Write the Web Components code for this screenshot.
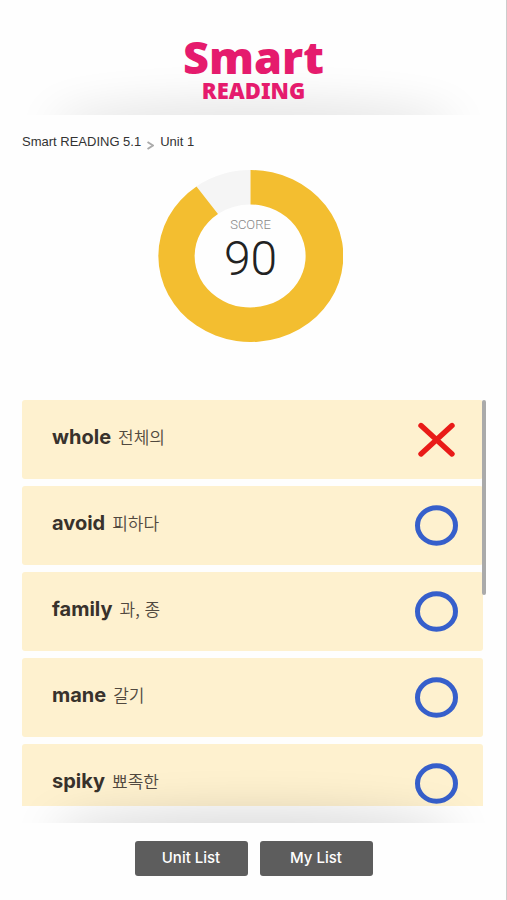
<!DOCTYPE html>
<html lang="ko">
<head>
<meta charset="utf-8">
<meta name="viewport" content="width=device-width, initial-scale=1">
<title>Smart READING</title>
<style>
html, body { margin: 0; height: 100%; background: #fefefe; }
</style>
</head>
<body>
<result-page></result-page>
<script>
const define = (name, html) => {
  const tpl = document.createElement('template');
  tpl.innerHTML = html;
  customElements.define(name, class extends HTMLElement {
    constructor() {
      super();
      this.attachShadow({ mode: 'open' }).append(tpl.content.cloneNode(true));
    }
  });
};

// Soft shadow that rises from the lower edge of its box.
define('edge-shade', `
<style>
  :host { display: block; position: absolute; left: 0; right: 0; bottom: 0; height: 80px; overflow: hidden; pointer-events: none; }
  div { position: absolute; left: 56px; right: 56px; top: 100%; height: 30px; border-radius: 50%;
    box-shadow: 0 -4px 44px 8px rgba(0,0,0,var(--shade, .11)); }
</style>
<div></div>`);

define('brand-header', `
<style>
  :host { display: block; position: relative; box-sizing: border-box; height: 115px; padding-top: 34px;
    color: #e51b6d; font-family: "Noto Sans", sans-serif; }
  h1 { position: relative; margin: 0; display: flex; flex-direction: column; align-items: center; font-weight: 900; }
  .big { font-size: 45px; line-height: 46px; }
  .small { font-size: 22px; line-height: 20px; }
</style>
<edge-shade></edge-shade>
<h1><span class="big">Smart</span><span class="small">READING</span></h1>`);

define('crumb-trail', `
<style>
  :host { display: block; padding: 18px 22px 0; font: 13px/18px "Liberation Sans", sans-serif; color: #333; }
  nav { display: flex; align-items: center; gap: 6px; }
  svg { width: 7px; height: 9px; margin-top: 6px; }
</style>
<nav aria-label="Breadcrumb"><slot name="book"></slot>
<svg viewBox="0 0 7 9" fill="none" stroke="#aaa" stroke-width="2"><path d="M0.5 1 L6 4.5 L0.5 8"/></svg>
<slot name="unit"></slot></nav>`);

define('score-ring', `
<style>
  :host { display: grid; justify-items: center; padding: 19px 6px 58px 0; }
  svg, .label { grid-area: 1 / 1; }
  svg { width: 185px; height: 172px; }
  .label { display: flex; flex-direction: column; align-items: center; padding-top: 47px; font-family: Roboto, sans-serif; font-weight: 300; }
  .cap { font-size: 13px; line-height: 15px; color: #888; }
  .num { font-size: 48px; line-height: 54px; color: #222; }
</style>
<svg viewBox="0 0 185 172" aria-hidden="true">
  <path fill="#f5f5f5" d="M92.5 0 A92.5 86 0 0 0 38.5 16.4 L60 44 A55.5 51.5 0 0 1 92.5 34.5 Z"/>
  <path fill="#f3be30" d="M92.5 0 A92.5 86 0 1 1 38.5 16.4 L60 44 A55.5 51.5 0 1 0 92.5 34.5 Z"/>
</svg>
<div class="label"><span class="cap">SCORE</span><span class="num"><slot></slot></span></div>`);

define('word-row', `
<style>
  :host { display: flex; flex: none; align-items: center; justify-content: space-between; box-sizing: border-box;
    height: 79px; padding: 0 24px 0 30px; border-radius: 3px; background: #fef1cf; }
  .text { display: flex; align-items: baseline; gap: 7px; padding-bottom: 6px; line-height: 26px; }
  .word { font-family: Inter, sans-serif; font-weight: 700; font-size: 20px; color: #38322c; }
  .mean { font-family: "Noto Sans CJK KR", sans-serif; font-weight: 350; font-size: 17px; color: #51493f; }
  svg { width: 45px; height: 42px; }
  .cross, :host([wrong]) .ring { display: none; }
  :host([wrong]) .cross { display: inline; }
</style>
<div class="text"><span class="word"><slot name="word"></slot></span><span class="mean"><slot></slot></span></div>
<svg viewBox="0 0 45 42" fill="none" aria-hidden="true">
  <ellipse class="ring" cx="22.5" cy="20.5" rx="19" ry="17.7" stroke="#365fcb" stroke-width="5"/>
  <path class="cross" d="M7 6.5 L38 35 M38 6.5 L7 35" stroke="#e91b18" stroke-width="5.4" stroke-linecap="round"/>
</svg>`);

define('word-list', `
<style>
  :host { display: block; position: relative; flex: 1 1 0; min-height: 0; margin: 0 21px 0 22px; }
  .rows { display: flex; flex-direction: column; gap: 7px; height: 100%; margin-right: 3px; overflow: hidden; }
  .thumb { position: absolute; top: 0; right: 0; width: 4px; height: 48%; border-radius: 2px; background: #aaa; }
</style>
<div class="rows"><slot></slot></div><div class="thumb"></div>`);

define('page-footer', `
<style>
  :host { display: block; }
  .band { position: relative; height: 17px; --shade: .15; }
  .bar { display: flex; justify-content: center; gap: 12px; padding: 18px 0 24px; }
</style>
<div class="band"><edge-shade></edge-shade></div><div class="bar"><slot></slot></div>`);

define('action-button', `
<style>
  :host { display: block; }
  button { display: block; width: 113px; height: 35px; margin: 0; padding: 0 0 2px; border: 0; border-radius: 3px;
    background: #5d5d5d; color: #fff; font: 500 15px/20px Inter, sans-serif; }
</style>
<button type="button"><slot></slot></button>`);

define('result-page', `
<style>
  :host { display: flex; flex-direction: column; height: 100vh; box-shadow: inset -1px 0 #ccc; background: #fefefe; }
</style>
<brand-header></brand-header>
<crumb-trail><span slot="book">Smart READING 5.1</span><span slot="unit">Unit 1</span></crumb-trail>
<score-ring>90</score-ring>
<word-list>
  <word-row wrong><span slot="word">whole</span>전체의</word-row>
  <word-row><span slot="word">avoid</span>피하다</word-row>
  <word-row><span slot="word">family</span>과, 종</word-row>
  <word-row><span slot="word">mane</span>갈기</word-row>
  <word-row><span slot="word">spiky</span>뾰족한</word-row>
</word-list>
<page-footer><action-button>Unit List</action-button><action-button>My List</action-button></page-footer>`);
</script>
</body>
</html>
